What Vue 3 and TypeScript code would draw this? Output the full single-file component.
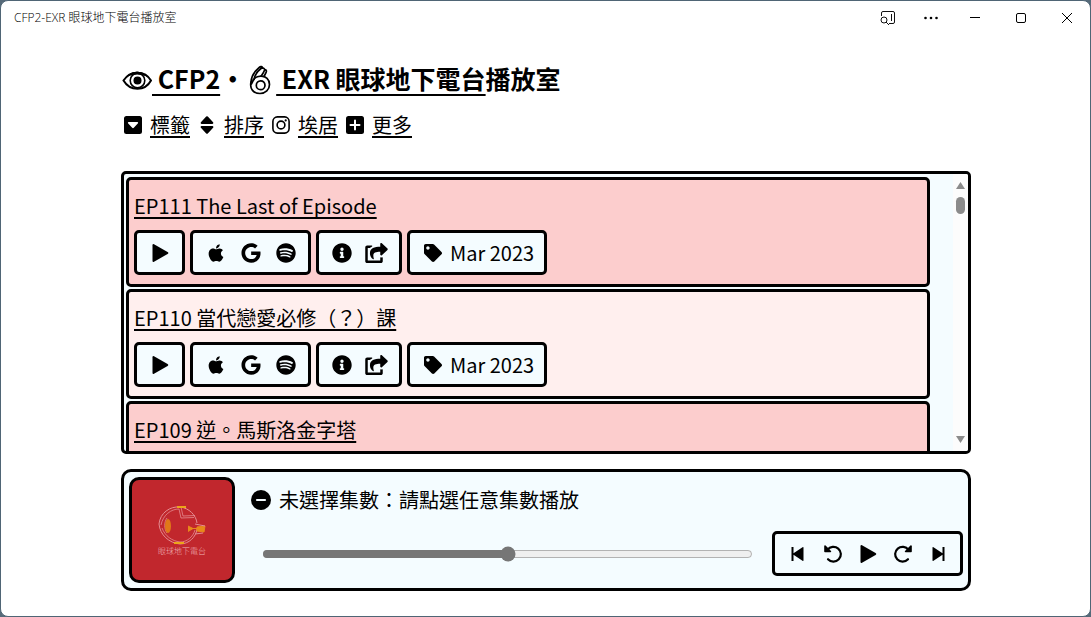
<script setup lang="ts">
import { ref } from 'vue'

interface Episode {
  id: number
  title: string
  tag: string
}

const episodes: Episode[] = [
  { id: 111, title: 'EP111 The Last of Episode', tag: 'Mar 2023' },
  { id: 110, title: 'EP110 當代戀愛必修（？）課', tag: 'Mar 2023' },
  { id: 109, title: 'EP109 逆。馬斯洛金字塔', tag: 'Mar 2023' },
]

const progress = ref(50)
</script>

<template>
  <div class="window" lang="zh-Hant">
    <header class="titlebar">
      <span class="caption">CFP2-EXR 眼球地下電台播放室</span>
      <div class="window-buttons">
        <button type="button" class="tool" aria-label="搜尋">
          <svg width="16" height="16" viewBox="0 0 16 16" fill="none" stroke="#111">
            <path d="M1.500 6V3q0-1.500 1.500-1.500h10q1.500 0 1.500 1.500v9q0 1.500-1.500 1.500H9M11.500 4v7" />
            <circle cx="4" cy="10" r="3" />
            <path d="M6 12l3 3" />
          </svg>
        </button>
        <button type="button" class="tool" aria-label="更多選項">
          <svg width="16" height="16" viewBox="0 0 16 16"><circle cx="2.500" cy="8" r="1.300" /><circle cx="8" cy="8" r="1.300" /><circle cx="13.500" cy="8" r="1.300" /></svg>
        </button>
        <button type="button" aria-label="最小化">
          <svg width="12" height="12" viewBox="0 0 12 12" fill="none" stroke="#000"><path d="M1 5.500h10" /></svg>
        </button>
        <button type="button" aria-label="最大化">
          <svg width="12" height="12" viewBox="0 0 12 12" fill="none" stroke="#000"><rect x="1.500" y="1.500" width="9" height="9" rx="1.500" /></svg>
        </button>
        <button type="button" aria-label="關閉">
          <svg width="12" height="12" viewBox="0 0 12 12" fill="none" stroke="#000"><path d="M1 1l10 10M11 1L1 11" /></svg>
        </button>
      </div>
    </header>

    <main class="content">
      <h1>
        <svg class="title-icon" viewBox="0 0 30 30" fill="none" stroke="#000" stroke-width="2">
          <path d="M1.500 15.500C8 5 23 5 29 15.500 23 26.500 8 26.500 1.500 15.500z" />
          <path d="M5 11Q15 3 25 11Q15 7 5 11z" fill="#000" stroke-width="1" />
          <circle cx="15.500" cy="15.500" r="7.300" stroke-width="1.600" />
          <circle cx="15.500" cy="15.500" r="4" fill="#000" stroke="none" />
        </svg><a href="#cfp2">&nbsp;CFP2</a>・<svg class="title-icon" viewBox="0 0 30 30" fill="none" stroke="#000" stroke-width="1.700" stroke-linejoin="round" stroke-linecap="round">
          <path d="M5 17C3.500 24 7.500 28.500 14 28.500c5.500 0 9.500-3.800 9.500-9s-3.700-8.300-8.500-8.300c-3.500 0-6 1.300-7.500 3.600" />
          <path d="M10.300 20.500c0 2.400 1.900 4.200 4.300 4.200s4.400-1.900 4.400-4.500-1.800-4.300-4.300-4.300c-2.400 0-4.400 1.900-4.400 4.600z" />
          <path d="M5 17c.2-4.500 1.800-7.500 4-10.300l4.300-4.400c1.300-1.300 3.200-.6 3.400.8M8 14.500c.8-4.500 3.200-8 7-11 1.700-1.300 4.200-.2 3.500 1.800-.7 2.300-2 4-3.300 5.700M7.500 14.800L5.500 19M19 4.700c1.500.3 1.700 1.600 1 3l-2 3.800" />
        </svg><a href="#exr">&nbsp;EXR 眼球地下電台</a>播放室
      </h1>

      <nav class="menu">
        <a href="#tags">
          <svg viewBox="0 0 18 18"><path fill-rule="evenodd" d="M2.500 0h13A2.500 2.500 0 0 1 18 2.500v13a2.500 2.500 0 0 1-2.500 2.500h-13A2.500 2.500 0 0 1 0 15.500v-13A2.500 2.500 0 0 1 2.500 0zM4.500 6q-1 .3-.5 1.200l4.200 4.600q.8.700 1.600 0L14 7.200q.5-.9-.5-1.200z" /></svg>
          <span>標籤</span>
        </a>
        <a href="#sort">
          <svg viewBox="0 0 18 18"><path d="M9.800.5l5.300 5.700q.8 1.500-.7 1.800H3.600q-1.500-.3-.7-1.800L8.200.5q.8-.7 1.600 0zM9.800 17.500l5.300-5.700q.8-1.500-.7-1.800H3.600q-1.500.3-.7 1.800l5.300 5.700q.8.700 1.600 0z" /></svg>
          <span>排序</span>
        </a>
        <a href="#instagram">
          <svg viewBox="0 0 18 18" fill="none" stroke="#000" stroke-width="1.600"><rect x=".9" y=".9" width="16.200" height="16.200" rx="4.500" /><circle cx="9" cy="9" r="3.900" /><circle cx="13.700" cy="4.400" r="1.100" fill="#000" stroke="none" /></svg>
          <span>埃居</span>
        </a>
        <a href="#more">
          <svg viewBox="0 0 18 18"><rect width="18" height="18" rx="2.500" /><path d="M9 4.500v9M4.500 9h9" stroke="#fff" stroke-width="2" stroke-linecap="round" /></svg>
          <span>更多</span>
        </a>
      </nav>

      <section class="episodes" aria-label="集數">
        <ul class="episode-list">
          <li v-for="episode in episodes" :key="episode.id" class="episode">
            <a class="episode-title" :href="`#ep${episode.id}`">{{ episode.title }}</a>
            <div class="groups">
              <div class="group">
                <button type="button" aria-label="播放">
                  <svg viewBox="0 0 20 20"><path d="M2.500 2.300Q2.500.6 4 1.300L17.600 9q1.500 1 0 2L4 18.700q-1.500.7-1.500-1z" /></svg>
                </button>
              </div>
              <div class="group">
                <a href="#apple" aria-label="Apple Podcasts">
                  <svg viewBox="-64 0 512 512"><path d="M318.700 268.700c-.2-36.700 16.400-64.400 50-84.800-18.800-26.900-47.200-41.700-84.700-44.600-35.500-2.800-74.300 20.700-88.500 20.700-15 0-49.400-19.700-76.400-19.700C63.300 141.200 4 184.800 4 273.500q0 39.300 14.400 81.200c12.800 36.700 59 126.700 107.200 125.200 25.200-.6 43-17.900 75.800-17.900 31.800 0 48.300 17.900 76.400 17.900 48.600-.7 90.400-82.500 102.600-119.300-65.200-30.700-61.700-90-61.700-91.900zm-56.600-164.200c27.300-32.400 24.800-61.900 24-72.500-24.100 1.400-52 16.400-67.900 34.900-17.500 19.800-27.800 44.300-25.600 71.900 26.100 2 49.900-11.400 69.500-34.300z" /></svg>
                </a>
                <a href="#google" aria-label="Google Podcasts">
                  <svg viewBox="-12 0 512 512"><path d="M488 261.800C488 403.300 391.100 504 248 504 110.800 504 0 393.200 0 256S110.800 8 248 8c66.800 0 123 24.500 166.300 64.900l-67.500 64.900C258.500 52.600 94.300 116.600 94.300 256c0 86.500 69.100 156.600 153.700 156.600 98.200 0 135-70.400 140.800-106.900H248v-85.300h236.100c2.300 12.700 3.900 24.900 3.900 41.400z" /></svg>
                </a>
                <a href="#spotify" aria-label="Spotify">
                  <svg viewBox="-8 0 512 512"><path d="M248 8C111.100 8 0 119.100 0 256s111.100 248 248 248 248-111.100 248-248S384.900 8 248 8zm100.700 364.900c-4.200 0-6.800-1.300-10.700-3.600-62.400-37.600-135-39.200-206.700-24.500-3.900 1-9 2.600-11.900 2.600-9.700 0-15.800-7.700-15.800-15.800 0-10.300 6.100-15.200 13.600-16.800 81.900-18.100 165.600-16.500 237 26.200 6.100 3.900 9.700 7.400 9.700 16.500s-7.100 15.400-15.200 15.400zm26.900-65.600c-5.200 0-8.700-2.300-12.300-4.200-62.500-37-155.700-51.900-238.600-29.400-4.800 1.300-7.400 2.600-11.900 2.600-10.700 0-19.400-8.700-19.400-19.400s5.200-17.800 15.500-20.700c27.800-7.800 56.200-13.600 97.800-13.600 64.900 0 127.600 16.100 177 45.500 8.100 4.800 11.300 11 11.300 19.700-.1 10.800-8.500 19.500-19.400 19.500zm31-76.200c-5.200 0-8.400-1.300-12.900-3.900-71.200-42.500-198.500-52.700-280.900-29.700-3.600 1-8.100 2.600-12.900 2.600-13.200 0-23.300-10.300-23.300-23.600 0-13.600 8.400-21.300 17.400-23.900 35.200-10.300 74.600-15.200 117.500-15.200 73 0 149.500 15.200 205.400 47.800 7.800 4.500 12.900 10.700 12.900 22.600 0 13.600-11 23.300-23.200 23.300z" /></svg>
                </a>
              </div>
              <div class="group">
                <button type="button" aria-label="資訊">
                  <svg viewBox="0 0 512 512"><path d="M256 8C119.043 8 8 119.083 8 256c0 136.997 111.043 248 248 248s248-111.003 248-248C504 119.083 392.957 8 256 8zm0 110c23.196 0 42 18.804 42 42s-18.804 42-42 42-42-18.804-42-42 18.804-42 42-42zm56 254c0 6.627-5.373 12-12 12h-88c-6.627 0-12-5.373-12-12v-24c0-6.627 5.373-12 12-12h12v-64h-12c-6.627 0-12-5.373-12-12v-24c0-6.627 5.373-12 12-12h64c6.627 0 12 5.373 12 12v100h12c6.627 0 12 5.373 12 12v24z" /></svg>
                </button>
                <button type="button" aria-label="分享">
                  <svg class="wide" viewBox="0 0 576 512"><path d="M568.482 177.448L424.479 313.433C409.300 327.768 384 317.140 384 295.985v-71.963c-144.575.97-205.566 35.113-164.775 171.353 4.483 14.973-12.846 26.567-25.006 17.330C155.252 383.105 120 326.488 120 269.339c0-143.937 117.599-172.500 264-173.312V24.012c0-21.174 25.317-31.768 40.479-17.448l144.003 135.988c10.020 9.463 10.028 25.425 0 34.896zM384 379.128V448H64V128h50.916a11.990 11.990 0 0 0 8.648-3.693c14.953-15.568 32.237-27.890 51.014-37.676C185.708 80.830 181.584 64 169.033 64H48C21.490 64 0 85.490 0 112v352c0 26.510 21.490 48 48 48h352c26.510 0 48-21.490 48-48v-88.806c0-8.288-8.197-14.066-16.011-11.302a71.830 71.830 0 0 1-34.189 3.377c-7.270-1.046-13.800 4.514-13.800 11.859z" /></svg>
                </button>
              </div>
              <div class="group">
                <button type="button" class="tag">
                  <svg class="small" viewBox="0 0 512 512"><path d="M0 252.118V48C0 21.490 21.490 0 48 0h204.118a48 48 0 0 1 33.941 14.059l211.882 211.882c18.745 18.745 18.745 49.137 0 67.882L293.823 497.941c-18.745 18.745-49.137 18.745-67.882 0L14.059 286.059A48 48 0 0 1 0 252.118zM112 64c-26.510 0-48 21.490-48 48s21.490 48 48 48 48-21.490 48-48-21.490-48-48-48z" /></svg>
                  <span>{{ episode.tag }}</span>
                </button>
              </div>
            </div>
          </li>
        </ul>
        <div class="scrollbar" aria-hidden="true">
          <svg width="9" height="7" viewBox="0 0 9 7"><path d="M4.500 0L9 7H0z" /></svg>
          <i></i>
          <svg width="9" height="7" viewBox="0 0 9 7"><path d="M4.500 7L9 0H0z" /></svg>
        </div>
      </section>

      <section class="player" aria-label="播放器">
        <div class="cover">
          <svg viewBox="0 0 50 40" fill="none" stroke="#e48d92" stroke-width="1">
            <path d="M2 19C3 8 13 1 23 2c9 1 16 8 17 16M2 19c1 11 10 19 21 20 9 0 16-7 17-15" />
            <path d="M4 20C6 10 14 4 22 4M5 23c3 8 10 13 18 14 7 0 13-5 15-12M22 4l2 9 13-.5M24 2l2 9 12-.5M10 13c-3 4-3 11 0 15" stroke-width=".8" />
            <path d="M20 2h9M17 38h10" stroke="#eba51b" stroke-width="2" />
            <ellipse cx="11" cy="21" rx="3" ry="7" fill="#e07818" stroke="none" />
            <path d="M31 21l5 2.500-5 3M33 23.500h7M40 22l8-1-1 6-7-1z" stroke="#e8891a" fill="#e8891a" />
            <path d="M38 19l10 2M38 29l8-1" />
          </svg>
          <span>眼球地下電台</span>
        </div>
        <div class="details">
          <p class="status">
            <svg viewBox="0 0 20 20"><circle cx="10" cy="10" r="10" /><path d="M6 10h8" stroke="#f4fcff" stroke-width="2.200" stroke-linecap="round" /></svg>
            未選擇集數：請點選任意集數播放
          </p>
          <div class="transport">
            <input v-model="progress" type="range" min="0" max="100" aria-label="播放進度">
            <div class="group">
              <button type="button" aria-label="上一集">
                <svg viewBox="0 0 20 20"><path d="M3.500 3h2v6.300l9-6q1-.6 1 .5v12.400q0 1.100-1 .5l-9-6V17h-2z" /></svg>
              </button>
              <button type="button" aria-label="倒轉">
                <svg viewBox="0 0 20 20"><path d="M4.500 5.800A7.400 7.400 0 1 1 5 15.200" fill="none" stroke="#000" stroke-width="2.200" stroke-linecap="round" /><path d="M1.200 2.200v5.300q0 .8.800.8h5.500q1.300-.3.500-1.300L2.600 1.500q-1.200-.7-1.400.7z" /></svg>
              </button>
              <button type="button" aria-label="播放">
                <svg viewBox="0 0 20 20"><path d="M2.500 2.300Q2.500.6 4 1.300L17.600 9q1.500 1 0 2L4 18.700q-1.500.7-1.500-1z" /></svg>
              </button>
              <button type="button" aria-label="快轉">
                <svg viewBox="0 0 20 20"><path d="M15.500 5.800A7.400 7.400 0 1 0 15 15.200" fill="none" stroke="#000" stroke-width="2.200" stroke-linecap="round" /><path d="M18.800 2.200v5.300q0 .8-.8.8h-5.500q-1.300-.3-.5-1.300l5.400-5.500q1.200-.7 1.400.7z" /></svg>
              </button>
              <button type="button" aria-label="下一集">
                <svg viewBox="0 0 20 20"><path d="M16.500 3h-2v6.300l-9-6q-1-.6-1 .5v12.400q0 1.100 1 .5l9-6V17h2z" /></svg>
              </button>
            </div>
          </div>
        </div>
      </section>
    </main>
  </div>
</template>

<style>
body {
  background: #566a79;
}
</style>

<style scoped>
* {
  box-sizing: border-box;
}

.window {
  display: flex;
  flex-direction: column;
  height: 100vh;
  border: 1px solid #4f6575;
  border-radius: 8px;
  overflow: hidden;
  background: #fff;
  color: #000;
  font: 20px/30px "Noto Sans CJK TC", sans-serif;
}

a {
  color: inherit;
  text-decoration: none;
}

button {
  display: flex;
  align-items: center;
  justify-content: center;
  padding: 0;
  border: 0;
  background: none;
  color: inherit;
  font: inherit;
}

.titlebar {
  display: flex;
  align-items: center;
  justify-content: space-between;
  height: 33px;
  padding-left: 13px;
}

.caption {
  font: 300 12px/16px "Open Sans", "Noto Sans CJK TC", sans-serif;
}

.window-buttons {
  display: flex;
  height: 100%;
}

.window-buttons button {
  width: 46px;
}

.window-buttons .tool {
  width: 43px;
}

.content {
  display: flex;
  flex: 1;
  flex-direction: column;
  min-height: 0;
  margin: 0 119px 0 120px;
  padding: 24px 0 25px;
}

h1 {
  margin: 0;
  font-size: 25px;
  font-weight: 700;
  line-height: 40px;
}

h1 a,
.menu span,
.episode-title {
  text-decoration: underline 2px;
  text-decoration-skip-ink: none;
  text-underline-offset: 3px;
}

h1 a {
  text-underline-offset: 5px;
}

.title-icon {
  width: 30px;
  height: 30px;
  margin-left: 1px;
  vertical-align: -6px;
}

.menu {
  display: flex;
  gap: 8px;
  margin-top: 12px;
  padding-left: 3px;
}

.menu a {
  display: flex;
  align-items: center;
  gap: 8px;
}

.menu svg {
  width: 18px;
  height: 18px;
}

.episodes {
  display: flex;
  flex: 1;
  min-height: 0;
  margin-top: 31px;
  border: 3px solid #000;
  border-radius: 5px;
  overflow: hidden;
  background: #f4fcff;
}

.episode-list {
  display: flex;
  flex: 1;
  flex-direction: column;
  gap: 2px;
  margin: 0;
  padding: 3px 23px 3px 2px;
  overflow-y: auto;
  list-style: none;
  scrollbar-width: none;
}

.episode {
  flex: none;
  padding: 11px 5px 9px;
  border: 3px solid #000;
  border-radius: 5px;
  background: #fccdcd;
}

.episode:nth-child(even) {
  background: #ffefee;
}

.episode-title {
  display: block;
}

.groups {
  display: flex;
  gap: 5px;
  margin-top: 9px;
}

.group {
  display: flex;
  height: 45px;
  padding: 0 5px;
  border: 3px solid #000;
  border-radius: 5px;
  background: #f4fcff;
}

.group a,
.group button {
  display: flex;
  align-items: center;
  justify-content: center;
  min-width: 35px;
}

.group svg {
  width: 20px;
  height: 20px;
}

.group svg.wide {
  width: 23px;
}

.group svg.small {
  width: 18px;
  height: 18px;
}

.group .tag {
  gap: 8px;
  padding: 0 5px 0 9px;
}

.scrollbar {
  display: flex;
  flex-direction: column;
  align-items: center;
  width: 15px;
  padding: 8px 0;
  background: #fcfcfc;
  fill: #8b8b8b;
}

.scrollbar i {
  width: 9px;
  height: 17px;
  margin: 8px 0 auto;
  border-radius: 5px;
  background: #8b8b8b;
}

.player {
  display: flex;
  gap: 16px;
  margin-top: 15px;
  padding: 5px;
  border: 3px solid #000;
  border-radius: 10px;
  background: #f4fcff;
}

.cover {
  display: flex;
  flex: none;
  flex-direction: column;
  align-items: center;
  width: 106px;
  height: 106px;
  padding-top: 25px;
  border: 3px solid #000;
  border-radius: 10px;
  background: #c1272d;
  color: #f0b4b7;
  font-size: 8px;
  font-weight: 300;
  line-height: 12px;
}

.cover svg {
  width: 50px;
  height: 40px;
}

.details {
  display: flex;
  flex: 1;
  flex-direction: column;
  justify-content: space-between;
  padding: 8px 0 7px;
}

.status {
  display: flex;
  align-items: center;
  gap: 8px;
  margin: 0;
}

.status svg {
  width: 20px;
  height: 20px;
}

.transport {
  display: flex;
  align-items: center;
  gap: 19px;
  padding-left: 11px;
}

.transport input {
  flex: 1;
  min-width: 0;
  margin: 0;
  accent-color: #767676;
}
</style>
